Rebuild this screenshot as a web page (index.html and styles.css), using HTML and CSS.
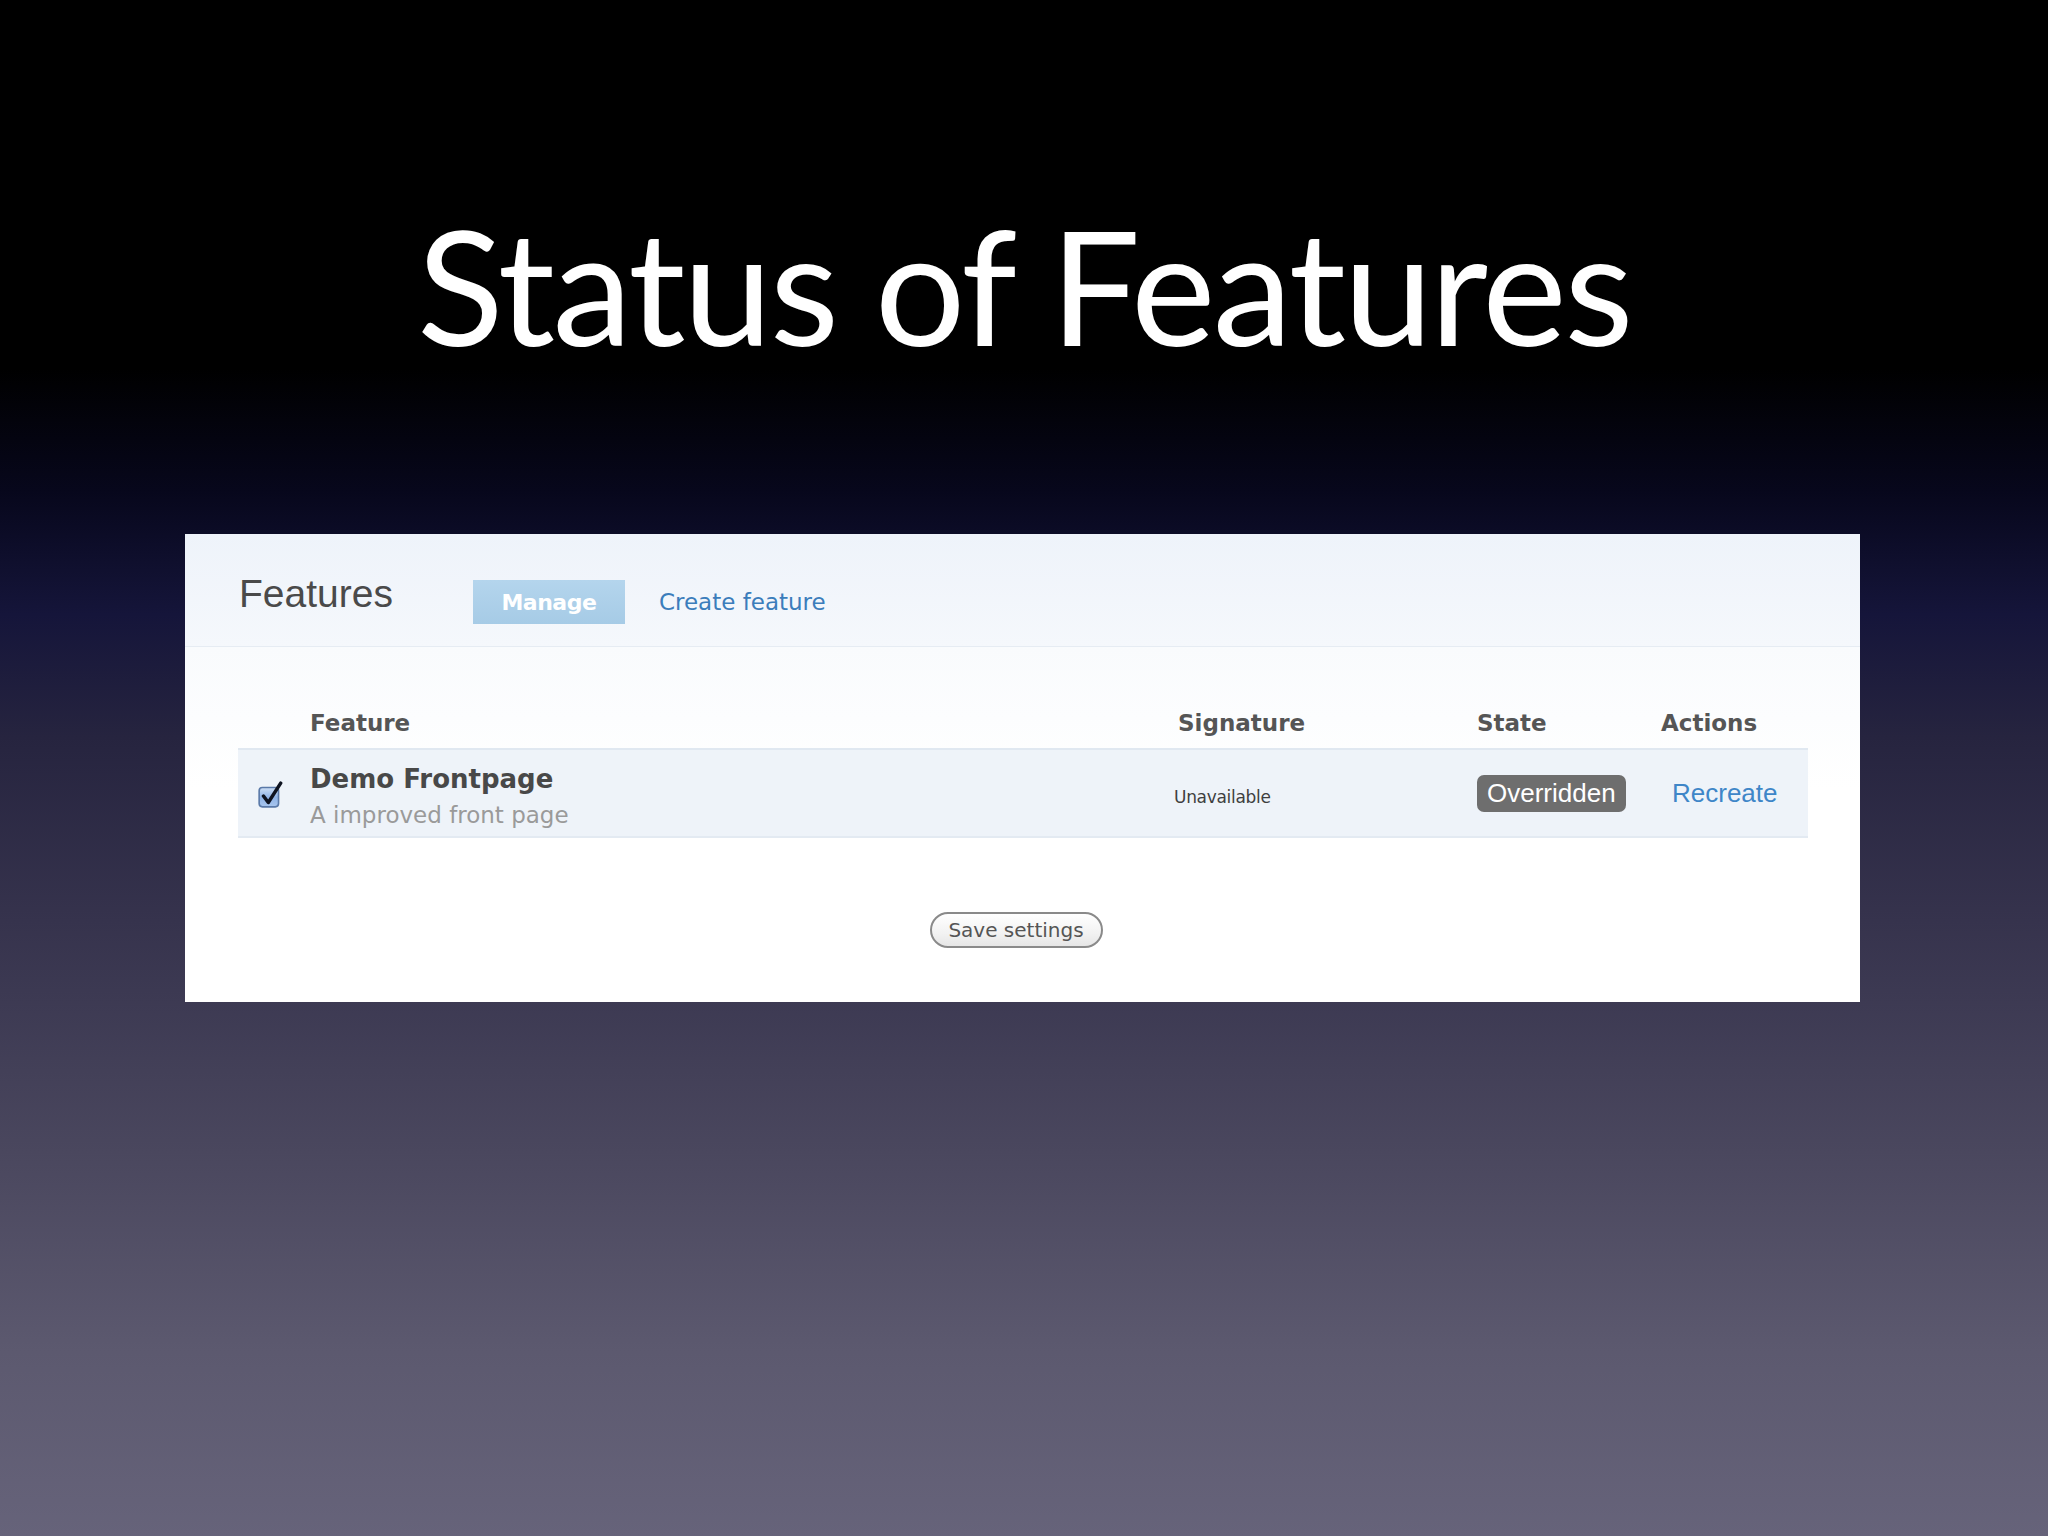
FILE: index.html
```html
<!DOCTYPE html>
<html>
<head>
<meta charset="utf-8">
<link rel="stylesheet" href="styles.css">
</head>
<body>
<div class="slide">
  <h1 class="title">Status of Features</h1>
  <div class="panel">
    <div class="panel-head">
      <h2 class="panel-title">Features</h2>
      <span class="tab-active">Manage</span>
      <a class="tab-link">Create feature</a>
    </div>
    <div class="panel-body">
      <div class="table">
        <div class="thead">
          <div class="th th-check"></div>
          <div class="th">Feature</div>
          <div class="th">Signature</div>
          <div class="th">State</div>
          <div class="th">Actions</div>
        </div>
        <div class="trow">
          <div class="td td-check">
            <svg class="checkbox" width="28" height="28" viewBox="0 0 26 26">
              <defs>
                <linearGradient id="cbg" x1="0" y1="0" x2="0" y2="1">
                  <stop offset="0" stop-color="#cfe0f6"/>
                  <stop offset="0.5" stop-color="#8fb3e6"/>
                  <stop offset="1" stop-color="#a9c6ee"/>
                </linearGradient>
              </defs>
              <rect x="2" y="6" width="18" height="18" rx="3" fill="url(#cbg)" stroke="#5a79a8" stroke-width="1.5"/>
              <path d="M6 14 L10.5 20 L22 2" fill="none" stroke="#0e1320" stroke-width="3.2" stroke-linecap="round" stroke-linejoin="round"/>
            </svg>
          </div>
          <div class="td td-feature">
            <div class="feat-name">Demo Frontpage</div>
            <div class="feat-desc">A improved front page</div>
          </div>
          <div class="td td-sig">Unavailable</div>
          <div class="td"><span class="badge">Overridden</span></div>
          <div class="td"><a class="action">Recreate</a></div>
        </div>
      </div>
      <div class="form-actions">
        <button class="save-btn">Save settings</button>
      </div>
    </div>
  </div>
</div>
</body>
</html>
```

FILE: styles.css
```css
html, body {
  margin: 0;
  padding: 0;
}
body {
  width: 2048px;
  height: 1536px;
  overflow: hidden;
  background: linear-gradient(to bottom,
    #000000 0%,
    #000000 24%,
    #07071c 32%,
    #15153a 40%,
    #26243f 48%,
    #36334d 60%,
    #4a475e 75%,
    #5c596f 88%,
    #66637a 100%);
}
.slide {
  display: flex;
  flex-direction: column;
  align-items: stretch;
  height: 1536px;
}
.title {
  margin: 194px 0 0 0;
  height: 340px;
  font-family: "Lato", "Open Sans", sans-serif;
  font-weight: 400;
  font-size: 160px;
  line-height: 180px;
  color: #ffffff;
  text-align: center;
  letter-spacing: -2.6px;
}
.panel {
  margin-left: 185px;
  width: 1675px;
  height: 468px;
  background: #ffffff;
  display: flex;
  flex-direction: column;
}
.panel-head {
  border-bottom: 1px solid #e6ecf3;
  background: linear-gradient(to bottom, #eef3fa 0%, #f5f8fc 100%);
  display: flex;
  align-items: center;
  padding-left: 54px;
  padding-top: 24px;
  box-sizing: border-box;
  height: 113px;
}
.panel-title {
  margin: 0 80px 0 0;
  font-family: "Liberation Sans", Arial, sans-serif;
  font-weight: 400;
  font-size: 39px;
  color: #4a4a4a;
  position: relative;
  top: -8px;
}
.tab-active {
  width: 152px;
  height: 44px;
  box-sizing: border-box;
  background: linear-gradient(to bottom, #b4d5ed 0%, #a6cbe6 100%);
  color: #ffffff;
  font-family: "DejaVu Sans", sans-serif;
  font-weight: 700;
  font-size: 22px;
  letter-spacing: -0.5px;
  display: flex;
  align-items: center;
  justify-content: center;
  margin-right: 34px;
}
.tab-link {
  font-family: "DejaVu Sans", sans-serif;
  font-size: 23px;
  color: #3b7dbb;
}
.panel-body {
  flex: 1;
  background: linear-gradient(to bottom, #f9fbfd 0%, #ffffff 40%);
  padding: 51px 52px 0 53px;
  display: flex;
  flex-direction: column;
}
.table {
  display: flex;
  flex-direction: column;
}
.thead, .trow {
  display: grid;
  grid-template-columns: 72px 868px 299px 184px 1fr;
}
.thead {
  height: 50px;
  align-items: center;
}
.th {
  font-family: "DejaVu Sans", sans-serif;
  font-weight: 700;
  font-size: 23px;
  color: #555555;
}
.trow {
  height: 90px;
  box-sizing: border-box;
  background: #eef3f9;
  border-top: 2px solid #e0e8f1;
  border-bottom: 2px solid #e3eaf2;
  align-items: center;
}
.td-check {
  display: flex;
  justify-content: center;
  padding-right: 6px;
}
.checkbox {
  display: block;
  margin-top: 4px;
}
.td-feature {
  padding-top: 8px;
}
.feat-name {
  font-family: "DejaVu Sans", sans-serif;
  font-weight: 700;
  font-size: 26px;
  color: #484848;
  line-height: 34px;
}
.feat-desc {
  font-family: "DejaVu Sans", sans-serif;
  font-size: 23px;
  color: #9a9a9a;
  line-height: 34px;
  margin-top: 2px;
}
.td-sig {
  font-family: "DejaVu Sans", sans-serif;
  font-size: 17px;
  color: #3f3f3f;
  margin-left: -4px;
  letter-spacing: -0.3px;
  padding-top: 8px;
}
.badge {
  display: inline-block;
  background: #6e6e6e;
  color: #ffffff;
  font-family: "Liberation Sans", Arial, sans-serif;
  font-size: 26px;
  line-height: 37px;
  padding: 0 10px;
  border-radius: 7px;
}
.action {
  font-family: "Liberation Sans", Arial, sans-serif;
  font-size: 26px;
  color: #3e86c8;
  margin-left: 11px;
}
.form-actions {
  display: flex;
  justify-content: center;
  margin-top: 74px;
  padding-right: 14px;
}
.save-btn {
  width: 173px;
  height: 36px;
  box-sizing: border-box;
  border: 2px solid #8a8a8a;
  border-radius: 18px;
  background: linear-gradient(to bottom, #ffffff 0%, #f2f2f2 60%, #e6e6e6 100%);
  font-family: "DejaVu Sans", sans-serif;
  font-size: 20px;
  color: #555555;
  padding: 0;
}
```
